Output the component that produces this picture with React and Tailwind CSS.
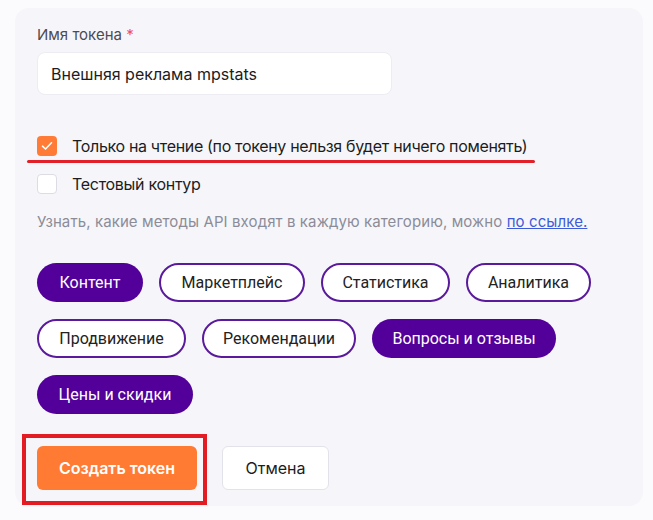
import React from "react";

const pills = [
  [
    { label: "Контент", w: "w-[106px]", on: true },
    { label: "Маркетплейс", w: "w-[146px]" },
    { label: "Статистика", w: "w-[129px]" },
    { label: "Аналитика", w: "w-[125px]" },
  ],
  [
    { label: "Продвижение", w: "w-[149px]" },
    { label: "Рекомендации", w: "w-[154px]" },
    { label: "Вопросы и отзывы", w: "w-[184px]", on: true },
  ],
  [{ label: "Цены и скидки", w: "w-[156px]", on: true }],
];

const Pill = ({ label, w, on }) => (
  <div
    className={`${w} h-[39px] rounded-full flex items-center justify-center text-[16px] font-['Roboto',sans-serif] ${
      on
        ? "bg-[#520099] text-white"
        : "bg-white border-2 border-[#5a1a9c] text-[#222]"
    }`}
  >
    {label}
  </div>
);

export default function App() {
  return (
    <div className="w-[653px] h-[520px] bg-[#fbfbfd] pt-[8px] pl-[15px] font-['Inter',sans-serif]">
      <div className="w-[628px] h-[498px] bg-[#f6f6fa] rounded-[14px] pl-[22px] pt-[17px]">
        <div className="text-[15px] leading-[20px] text-[#4b4b55]">
          Имя токена <span className="text-[#f0505a]">*</span>
        </div>
        <div className="mt-[7px] w-[355px] h-[43px] bg-white rounded-[8px] border border-[#ececf2] flex items-center pl-[13px] text-[16px] text-[#1c1c22]">
          Внешняя реклама mpstats
        </div>

        <div className="relative mt-[41px] flex items-center h-[20px]">
          <div className="w-[20px] h-[20px] rounded-[4px] bg-[#ff7b36] flex items-center justify-center">
            <svg width="12" height="10" viewBox="0 0 12 10" fill="none">
              <path
                d="M1.5 5.2 4.5 8 10.5 1.8"
                stroke="white"
                strokeWidth="1.6"
                strokeLinecap="round"
                strokeLinejoin="round"
              />
            </svg>
          </div>
          <span className="ml-[15px] text-[16px] text-[#1c1c22] tracking-[-0.33px]">
            Только на чтение (по токену нельзя будет ничего поменять)
          </span>
          <div className="absolute left-[-10px] top-[24px] w-[508px] h-[3px] rounded-full bg-[#e2202a]" />
        </div>

        <div className="mt-[18px] flex items-center h-[20px]">
          <div className="w-[20px] h-[20px] rounded-[4px] bg-white border border-[#dcdce4]" />
          <span className="ml-[15px] text-[16px] text-[#1c1c22] tracking-[-0.3px]">
            Тестовый контур
          </span>
        </div>

        <div className="mt-[18px] text-[15px] leading-[20px] text-[#8c8c98] tracking-[0.1px]">
          Узнать, какие методы API входят в каждую категорию, можно{" "}
          <a className="text-[#3d5bd9] underline">по ссылке.</a>
        </div>

        <div className="mt-[31px] flex flex-col gap-[17px]">
          {pills.map((row, i) => (
            <div key={i} className="flex gap-[16px]">
              {row.map((p) => (
                <Pill key={p.label} {...p} />
              ))}
            </div>
          ))}
        </div>

        <div className="relative mt-[32px] flex items-center gap-[25px]">
          <div className="absolute left-[-15px] top-[-12px] w-[185px] h-[71px] border-[4px] border-[#e31b23]" />
          <button className="w-[160px] h-[44px] rounded-[6px] bg-[#ff7b33] text-white text-[16px] font-semibold">
            Создать токен
          </button>
          <button className="w-[107px] h-[44px] rounded-[6px] bg-white border border-[#e2e2ea] text-[#1c1c22] text-[16px]">
            Отмена
          </button>
        </div>
      </div>
    </div>
  );
}
